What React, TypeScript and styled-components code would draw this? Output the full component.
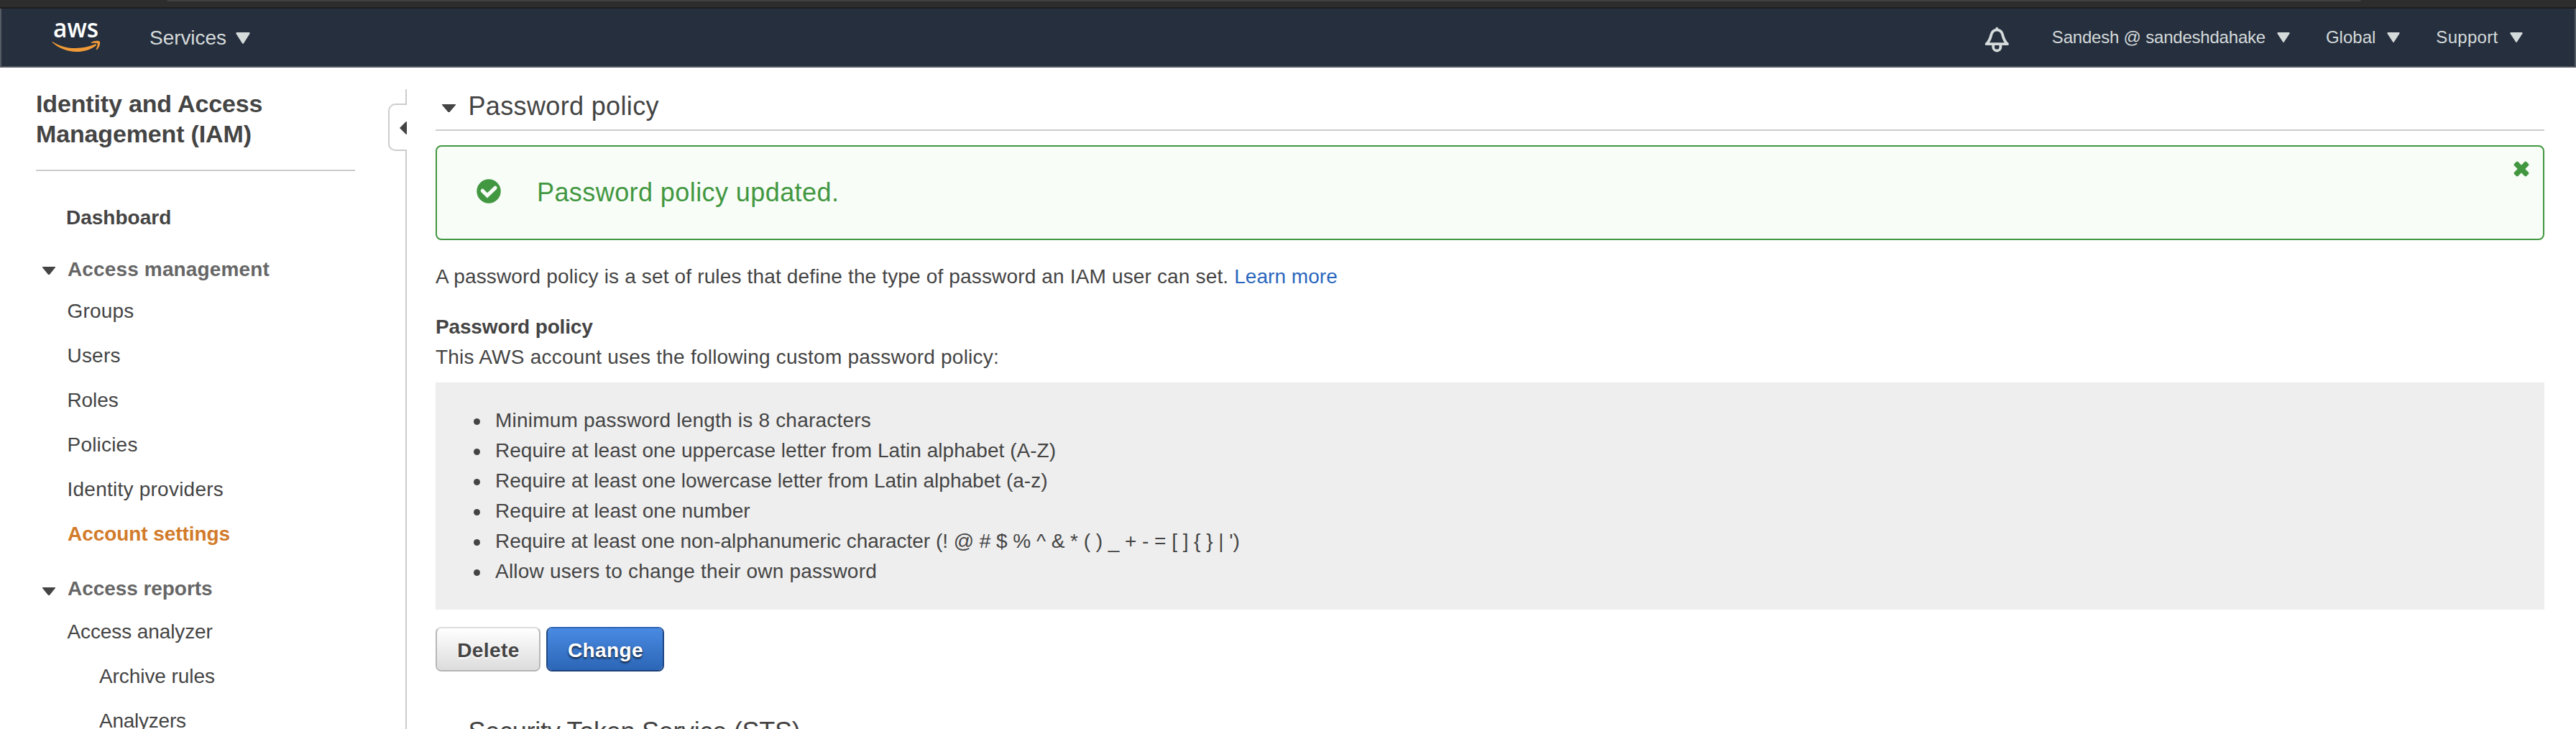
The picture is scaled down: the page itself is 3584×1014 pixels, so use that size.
import React from 'react';
import styled, { createGlobalStyle, css } from 'styled-components';

const GlobalStyle = createGlobalStyle`
  *, *::before, *::after { box-sizing: border-box; }
  html, body { margin: 0; padding: 0; background: #fff; }
  body {
    font-family: "Liberation Sans", Arial, Helvetica, sans-serif;
    font-size: 28px;
    line-height: 42px;
    color: #444;
    overflow: hidden;
  }
  h1, h2, h3, p, ul { margin: 0; padding: 0; font: inherit; }
  svg { display: block; flex: none; }
`;

const Page = styled.div`
  display: flex;
  flex-direction: column;
  height: 1014px;
  overflow: hidden;
`;

/* Browser edge and console bar */

const BrowserEdge = styled.div`
  flex: none;
  display: flex;
  height: 12px;
  padding: 0 299px 0 232px;
  background: #2d2d2d;
  border-bottom: 2px solid #1e1e1f;
`;

const AddressBar = styled.div`
  flex: 1;
  height: 2px;
  background: #404040;
  border-radius: 0 0 4px 4px;
`;

const TopBar = styled.header`
  flex: none;
  display: flex;
  align-items: center;
  height: 82px;
  padding: 0 72.5px 0 70px;
  background: #262f3e;
  border: 2px solid #545b64;
  border-top: 0;
  color: #d5dbdb;
`;

const Account = styled.nav`
  display: flex;
  align-items: center;
  gap: 50px;
  margin-left: 58px;
  font-size: 24px;
`;

const Spacer = styled.div`
  flex: 1;
`;

const MenuItem = styled.div<{ $gap?: number; $tracking?: string; $indent?: number; $drop?: number }>`
  display: flex;
  align-items: center;
  gap: ${(p) => p.$gap ?? 16}px;
  margin-left: ${(p) => p.$indent ?? 0}px;
  padding-top: ${(p) => p.$drop ?? 0}px;
  letter-spacing: ${(p) => p.$tracking ?? 'normal'};
  white-space: nowrap;
`;

const MenuCaret = ({ width, height }: { width: number; height: number }) => (
  <svg width={width} height={height} viewBox="0 0 20 16" preserveAspectRatio="none">
    <path d="M1.6 1.3H18.4L10 14.6Z" fill="currentColor" stroke="currentColor" strokeWidth="2.4" strokeLinejoin="round" />
  </svg>
);

const LogoSlot = styled.div`
  padding-bottom: 2px;
`;

const BellSlot = styled.div`
  padding-top: 6px;
`;

const WordMark = styled.text`
  font: 600 35.5px "Open Sans", "Noto Sans", sans-serif;
  fill: #fff;
`;

const AwsLogo = () => (
  <svg width="70" height="46" viewBox="0 0 70 46">
    <WordMark x="2" y="23.7" textLength="63" lengthAdjust="spacingAndGlyphs">
      aws
    </WordMark>
    <path
      d="M1.4 30.2C11 36.4 22 39.4 33.5 39C43 38.7 52 36.7 60.3 33.4C61.9 32.9 62.9 34.2 61.5 35.4C54 41 44.5 44 34.5 44C21.5 44 10 39.3 1.3 31.6C.3 30.6 .5 29.7 1.4 30.2Z"
      fill="#f29b36"
    />
    <path
      d="M55 31C58.5 28.5 64.5 28.2 66.6 29.4C68.3 32 66 38.3 62.8 41C62 41.6 61.4 41.2 61.8 40.4C63 37.5 64.4 33.8 63.6 32.5C62.6 31.4 59 31.8 55.8 32C54.6 32 54.3 31.6 55 31Z"
      fill="#f29b36"
    />
  </svg>
);

const BellIcon = () => (
  <svg width="37" height="38" viewBox="0 0 37 38" fill="none" stroke="currentColor" strokeWidth="3.8" strokeLinejoin="round" strokeLinecap="round">
    <path d="M18.3 3.7V5" />
    <path d="M3.6 25.2C8.5 21 9.3 16.5 10.5 12C11.7 7.5 14 5.6 18.3 5.6C22.6 5.6 24.9 7.5 26.1 12C27.3 16.5 28.1 21 33 25.2Z" />
    <path d="M13.2 26.5V29.4A5.1 5.1 0 0 0 23.4 29.4V26.5" />
  </svg>
);

/* Sidebar */

const Body = styled.div`
  flex: 1;
  display: flex;
  min-height: 0;
`;

const Sidebar = styled.aside`
  flex: none;
  display: flex;
  flex-direction: column;
  width: 540px;
  padding: 29px 46px 0 50px;
`;

const ServiceTitle = styled.h1`
  font-size: 34px;
  font-weight: bold;
  letter-spacing: -0.15px;
  padding-bottom: 29px;
  border-bottom: 2px solid #ccc;
  margin-bottom: 33px;
`;

const navText = css<{ $tracking?: string }>`
  letter-spacing: ${(p) => p.$tracking ?? 'normal'};
  white-space: nowrap;
`;

const NavLink = styled.div<{ $tracking?: string; $bold?: boolean; $active?: boolean; $nested?: boolean }>`
  ${navText}
  flex: none;
  height: 62px;
  line-height: 64px;
  padding-left: ${(p) => (p.$nested ? 88 : p.$active ? 44 : p.$bold ? 42 : 43.5)}px;
  font-weight: ${(p) => (p.$bold || p.$active ? 'bold' : 'normal')};
  color: ${(p) => (p.$active ? '#d27b2a' : 'inherit')};
`;

const NavGroup = styled.div<{ $tracking?: string; $before: number; $after: number }>`
  ${navText}
  flex: none;
  display: flex;
  align-items: center;
  gap: 17px;
  height: 38px;
  line-height: 38px;
  margin: ${(p) => p.$before}px 0 ${(p) => p.$after}px;
  padding-left: 9px;
  font-weight: bold;
  color: #666;
`;

const Twisty = styled.span<{ $w: number; $h: number; $drop: number }>`
  flex: none;
  width: ${(p) => p.$w}px;
  height: ${(p) => p.$h}px;
  margin-top: ${(p) => p.$drop}px;
  background: #444;
  clip-path: polygon(0 0, 100% 0, 100% 10%, 55% 100%, 45% 100%, 0 10%);
`;

const Divider = styled.div`
  flex: none;
  display: flex;
  flex-direction: column;
  align-items: flex-end;
  width: 26px;
  padding-top: 30px;
`;

const DividerLine = styled.div<{ $height?: number }>`
  flex: ${(p) => (p.$height ? 'none' : '1')};
  width: 2px;
  height: ${(p) => (p.$height ? `${p.$height}px` : 'auto')};
  background: #ccc;
`;

const CollapseTab = styled.div`
  flex: none;
  display: flex;
  align-items: center;
  justify-content: flex-end;
  width: 26px;
  height: 66px;
  padding-top: 2px;
  border: 2px solid #ccc;
  border-right: 0;
  border-radius: 10px 0 0 10px;
`;

const CollapseArrow = styled.span`
  width: 10px;
  height: 18px;
  background: #444;
  clip-path: polygon(100% 0, 100% 100%, 85% 97%, 0 50%, 85% 3%);
`;

/* Main column */

const Main = styled.main`
  flex: 1;
  min-width: 0;
  padding: 34px 44px 0 40px;
`;

const SectionHeading = styled.h2<{ $tracking: string; $ruled?: boolean }>`
  display: flex;
  align-items: center;
  gap: 17.5px;
  padding-left: ${(p) => (p.$ruled ? 9 : 45.5)}px;
  font-size: 36px;
  line-height: 40px;
  letter-spacing: ${(p) => p.$tracking};
  ${(p) =>
    p.$ruled
      ? css`
          padding-bottom: 12px;
          border-bottom: 2px solid #ccc;
        `
      : css`
          margin-top: 64px;
        `}
`;

const Alert = styled.div`
  display: flex;
  align-items: center;
  height: 132px;
  margin-top: 20px;
  padding: 0 19px 4px 55px;
  background: #f8fdf7;
  border: 2px solid #429741;
  border-radius: 8px;
  color: #429741;
`;

const AlertMessage = styled.p`
  flex: 1;
  padding: 4px 0 0 50px;
  font-size: 36px;
  letter-spacing: 0.42px;
`;

const CloseButton = styled.span`
  align-self: flex-start;
  padding-top: 20px;
`;

const Copy = styled.p<{ $tracking?: string; $bold?: boolean; $before?: number }>`
  margin-top: ${(p) => p.$before ?? 0}px;
  letter-spacing: ${(p) => p.$tracking ?? 'normal'};
  font-weight: ${(p) => (p.$bold ? 'bold' : 'normal')};
`;

const Link = styled.a`
  color: #2a66bd;
  letter-spacing: 0.04px;
`;

const PolicyBox = styled.ul`
  height: 316px;
  margin-top: 14px;
  padding: 32px 0 0 53px;
  background: #eee;
  list-style: none;
`;

const PolicyRule = styled.li<{ $tracking: string }>`
  display: flex;
  align-items: center;
  gap: 21px;
  letter-spacing: ${(p) => p.$tracking};
  white-space: pre;

  &::before {
    content: '';
    width: 9px;
    height: 9px;
    margin-top: 2px;
    border-radius: 50%;
    background: #444;
  }
`;

const ButtonRow = styled.div`
  display: flex;
  gap: 8px;
  margin-top: 24px;
`;

const Button = styled.button<{ $primary?: boolean }>`
  width: ${(p) => (p.$primary ? 164 : 146)}px;
  height: 62px;
  padding: 4px 0 0 1px;
  font: bold 28px/42px "Liberation Sans", Arial, sans-serif;
  letter-spacing: 0.42px;
  border: 2px solid;
  border-radius: 8px;
  ${(p) =>
    p.$primary
      ? css`
          color: #fff;
          background: linear-gradient(#498ae2, #2c66b7) padding-box;
          border-color: #2b65b6 #1f4785 #1c407a;
          text-shadow: 0 2px 3px rgba(0, 0, 0, 0.8);
        `
      : css`
          color: #444;
          background: linear-gradient(#fff, #dcdcdc) padding-box;
          border-color: #dcdcdc #b7b7b7 #b5b5b5;
          text-shadow: 0 2px 2px #fff;
        `}
`;

const CheckIcon = () => (
  <svg width="34" height="34" viewBox="0 0 34 34">
    <circle cx="17" cy="17" r="16.7" fill="currentColor" />
    <path d="M8.3 16.3L15 22.8L26 12.3" fill="none" stroke="#f8fdf7" strokeWidth="5.2" strokeLinecap="round" />
  </svg>
);

const CloseIcon = () => (
  <svg width="22" height="22" viewBox="0 0 22 22" fill="currentColor">
    <rect x="-1" y="7.2" width="24" height="7.6" rx="2" transform="rotate(45 11 11)" />
    <rect x="-1" y="7.2" width="24" height="7.6" rx="2" transform="rotate(-45 11 11)" />
  </svg>
);

const rules: { text: string; tracking: string }[] = [
  { text: 'Minimum password length is 8 characters', tracking: '0.2px' },
  { text: 'Require at least one uppercase letter from Latin alphabet (A-Z)', tracking: '0.03px' },
  { text: 'Require at least one lowercase letter from Latin alphabet (a-z)', tracking: '0.02px' },
  { text: 'Require at least one number', tracking: '0.05px' },
  { text: "Require at least one non-alphanumeric character (! @ # $ % ^ & * ( ) _ + - = [ ] { } | ')", tracking: '-0.04px' },
  { text: 'Allow users to change their own password', tracking: '0.2px' },
];

export default function App() {
  return (
    <Page>
      <GlobalStyle />
      <BrowserEdge>
        <AddressBar />
      </BrowserEdge>
      <TopBar>
        <LogoSlot>
          <AwsLogo />
        </LogoSlot>
        <MenuItem $gap={13.5} $indent={66} $drop={1} $tracking="-0.05px">
          Services
          <MenuCaret width={20} height={16} />
        </MenuItem>
        <Spacer />
        <BellSlot>
          <BellIcon />
        </BellSlot>
        <Account>
          <MenuItem $tracking="-0.21px">
            Sandesh @ sandeshdahake
            <MenuCaret width={18} height={14} />
          </MenuItem>
          <MenuItem>
            Global
            <MenuCaret width={18} height={14} />
          </MenuItem>
          <MenuItem $tracking="0.3px">
            Support
            <MenuCaret width={18} height={14} />
          </MenuItem>
        </Account>
      </TopBar>

      <Body>
        <Sidebar>
          <ServiceTitle>
            Identity and Access
            <br />
            Management (IAM)
          </ServiceTitle>
          <NavLink $bold>Dashboard</NavLink>
          <NavGroup $before={23} $after={7} $tracking="0.14px">
            <Twisty $w={18} $h={11} $drop={3} />
            Access management
          </NavGroup>
          <NavLink $tracking="0.2px">Groups</NavLink>
          <NavLink $tracking="0.2px">Users</NavLink>
          <NavLink $tracking="-0.1px">Roles</NavLink>
          <NavLink $tracking="0.2px">Policies</NavLink>
          <NavLink $tracking="0.24px">Identity providers</NavLink>
          <NavLink $active $tracking="-0.07px">
            Account settings
          </NavLink>
          <NavGroup $before={27} $after={9} $tracking="-0.06px">
            <Twisty $w={18} $h={11} $drop={7} />
            Access reports
          </NavGroup>
          <NavLink $tracking="-0.11px">Access analyzer</NavLink>
          <NavLink $nested $tracking="-0.07px">
            Archive rules
          </NavLink>
          <NavLink $nested $tracking="-0.24px">
            Analyzers
          </NavLink>
        </Sidebar>

        <Divider>
          <DividerLine $height={20} />
          <CollapseTab>
            <CollapseArrow />
          </CollapseTab>
          <DividerLine />
        </Divider>

        <Main>
          <SectionHeading $ruled $tracking="0.35px">
            <Twisty $w={19} $h={11} $drop={5} />
            Password policy
          </SectionHeading>
          <Alert>
            <CheckIcon />
            <AlertMessage>Password policy updated.</AlertMessage>
            <CloseButton>
              <CloseIcon />
            </CloseButton>
          </Alert>
          <Copy $before={30} $tracking="0.155px">
            A password policy is a set of rules that define the type of password an IAM user can set. <Link>Learn more</Link>
          </Copy>
          <Copy $bold $before={28} $tracking="-0.15px">
            Password policy
          </Copy>
          <Copy $tracking="0.222px">This AWS account uses the following custom password policy:</Copy>
          <PolicyBox>
            {rules.map((rule) => (
              <PolicyRule key={rule.text} $tracking={rule.tracking}>
                {rule.text}
              </PolicyRule>
            ))}
          </PolicyBox>
          <ButtonRow>
            <Button>Delete</Button>
            <Button $primary>Change</Button>
          </ButtonRow>
          <SectionHeading $tracking="-0.27px">Security Token Service (STS)</SectionHeading>
        </Main>
      </Body>
    </Page>
  );
}
